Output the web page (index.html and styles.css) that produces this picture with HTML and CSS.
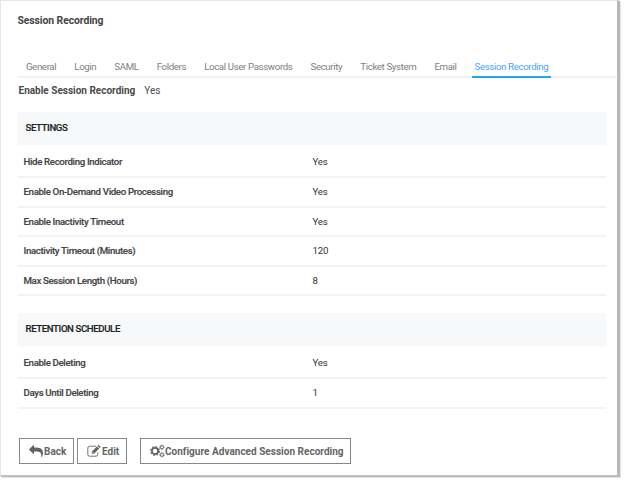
FILE: index.html
```html
<!DOCTYPE html>
<html lang="en">
<head>
<meta charset="utf-8">
<title>Session Recording</title>
<link rel="stylesheet" href="styles.css">
</head>
<body>
<main class="panel">
  <h1 class="title">Session Recording</h1>
  <nav class="tabs">
    <a class="tab">General</a>
    <a class="tab">Login</a>
    <a class="tab">SAML</a>
    <a class="tab">Folders</a>
    <a class="tab">Local User Passwords</a>
    <a class="tab">Security</a>
    <a class="tab">Ticket System</a>
    <a class="tab">Email</a>
    <a class="tab active">Session Recording</a>
  </nav>
  <div class="enable"><b>Enable Session Recording</b><span>Yes</span></div>
  <section class="section">
    <h2>SETTINGS</h2>
    <dl>
      <div class="row"><dt>Hide Recording Indicator</dt><dd>Yes</dd></div>
      <div class="row"><dt>Enable On-Demand Video Processing</dt><dd>Yes</dd></div>
      <div class="row"><dt>Enable Inactivity Timeout</dt><dd>Yes</dd></div>
      <div class="row"><dt>Inactivity Timeout (Minutes)</dt><dd>120</dd></div>
      <div class="row"><dt>Max Session Length (Hours)</dt><dd>8</dd></div>
    </dl>
  </section>
  <section class="section">
    <h2>RETENTION SCHEDULE</h2>
    <dl>
      <div class="row"><dt>Enable Deleting</dt><dd>Yes</dd></div>
      <div class="row"><dt>Days Until Deleting</dt><dd>1</dd></div>
    </dl>
  </section>
  <div class="actions">
    <button class="btn back"><svg width="14" height="12" viewBox="0 0 1792 1536"><path transform="translate(1792 -64) scale(-1 1)" fill="currentColor" d="M1792 640q0 26-19 45l-512 512q-19 19-45 19t-45-19-19-45v-256h-224q-98 0-175.500 6t-154 21.500-133 42.500-105.500 69.500-80 101-48.500 138.500-17.500 181q0 55 5 123 0 6 2.500 23.500t2.500 26.500q0 15-8.500 25t-23.500 10q-16 0-28-17-7-9-13-22t-13.500-30-10.500-24q-127-285-127-451 0-199 53-333 162-403 875-403h224v-256q0-26 19-45t45-19 45 19l512 512q19 19 19 45z"/></svg><span>Back</span></button>
    <button class="btn edit"><svg width="14" height="12" viewBox="0 0 14 12"><path fill="none" stroke="currentColor" stroke-width=".9" d="M9.2 1.2H2.600Q.8 1.200.8 3v6.400q0 1.800 1.800 1.800h6.400q1.800 0 1.800-1.800V7.500"/><path fill="currentColor" d="M4.900 6.500 10 1.400l2.200 2.200-5.100 5.100H4.900zM10.500.9l.6-.6q.5-.5 1 0l1.200 1.200q.5.500 0 1l-.6.6z"/><path stroke="#fff" stroke-width=".6" d="m5.500 6.900 1.200 1.200"/></svg><span>Edit</span></button>
    <button class="btn configure"><svg width="15" height="14" viewBox="0 0 15 14" fill="none" stroke="currentColor"><circle cx="5" cy="7" r="3.100" stroke-width="1.800"/><circle cx="5" cy="7" r="4.400" stroke-width="1.200" stroke-dasharray="1.728 1.728"/><circle cx="11.900" cy="3.200" r="1.600" stroke-width="1"/><circle cx="11.900" cy="3.200" r="2.300" stroke-width=".7" stroke-dasharray=".9 .906"/><circle cx="11.900" cy="10.800" r="1.600" stroke-width="1"/><circle cx="11.900" cy="10.800" r="2.300" stroke-width=".7" stroke-dasharray=".9 .906"/></svg><span>Configure Advanced Session Recording</span></button>
  </div>
</main>
</body>
</html>
```
FILE: styles.css
```css
* { box-sizing: border-box; }
body {
  margin: 0;
  min-height: 482px;
  background: #fff;
  font-family: Roboto, "Liberation Sans", sans-serif;
  color: #444;
}
.panel {
  width: 619px;
  height: 476px;
  padding-left: 16.500px;
  border: 1px solid #e6e6e6;
  border-right: 2px solid #b8b8b8;
  border-bottom-color: #c4c4c4;
  box-shadow: 1px 1px 0 #b8b8b8, 2px 2px 1px #e4e4e4;
}
.title { margin: 0; padding-top: 13px; font-size: 10.400px; line-height: 14px; font-weight: 700; letter-spacing: -.08px; }
.tabs {
  display: flex;
  gap: 12.250px;
  height: 28px;
  margin-top: 22px;
  padding-left: 5.500px;
  border-bottom: 2px solid #f2f2f2;
}
.tab {
  height: 27px;
  padding: 11px 2.900px 0;
  font-size: 9.700px;
  letter-spacing: -.37px;
  line-height: 12px;
  color: #808080;
  white-space: nowrap;
}
.tab.active { height: 28px; color: #42a5f5; border-bottom: 2px solid #22a7f5; }
.enable { display: flex; gap: 9px; height: 34px; padding: 6px 0 0 1px; font-size: 10px; line-height: 14px; color: #4a4a4a; }
.enable b { font-weight: 700; }
.section { width: 588.500px; margin-bottom: 17px; padding-left: .5px; }
h2 {
  height: 33px;
  margin: 0;
  padding-left: 7.500px;
  background: #f6f8fa;
  color: #222;
  font-size: 9.600px;
  letter-spacing: -.38px;
  line-height: 32px;
  font-weight: 500;
  -webkit-text-stroke: .15px currentColor;
}
dl { margin: 0; }
.row {
  display: grid;
  grid-template-columns: 289px 1fr;
  height: 29.600px;
  padding: 0 0 0 5.500px;
  border-bottom: 2px solid #f1f4f4;
  font-size: 9.700px;
  letter-spacing: -.36px;
  line-height: 28px;
}
.row:first-child { height: 33px; padding-top: 3px; }
dt { font-weight: 500; -webkit-text-stroke: .15px currentColor; }
dd { margin: 0; color: #333; letter-spacing: -.2px; }
.actions { display: flex; padding: 12px 0 0 1.500px; }
.btn {
  display: flex;
  align-items: center;
  height: 26px;
  padding: 1px 0 0 9px;
  border: 1px solid #888;
  background: #fff;
  color: #646464;
  font: 700 10px Roboto, sans-serif;
  white-space: nowrap;
}
.back { width: 55px; margin-right: 3px; }
.edit { width: 50px; margin-right: 13px; }
.configure { width: 211px; }
.btn svg { flex: none; margin-right: 1px; }
.configure svg { margin-right: 0; }
.configure span { letter-spacing: .02px; }
```
